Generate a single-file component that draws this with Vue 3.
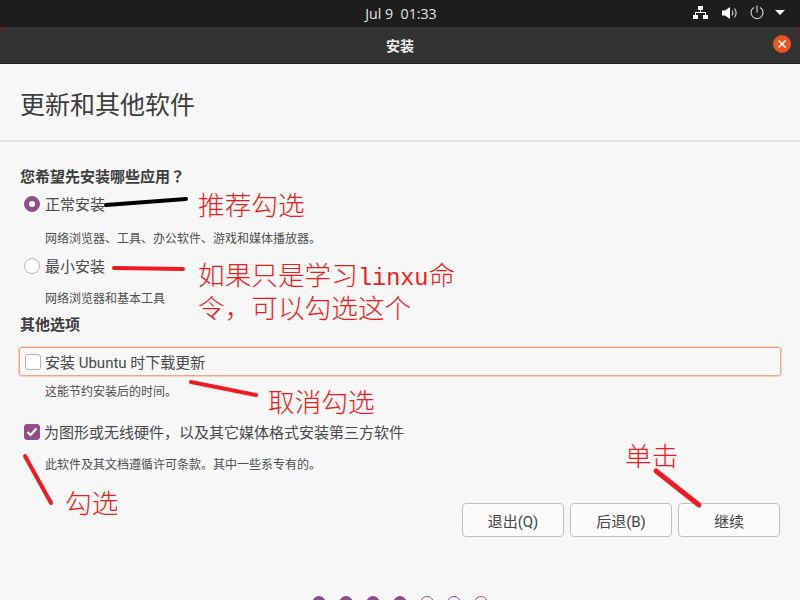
<script setup>
const dots = [true, true, true, true, false, false, false]
const strokes = [
  { d: 'M106 205 L186 199', c: '#000', w: 4 },
  { d: 'M114 268 L183 269', c: '#ed1c24', w: 4 },
  { d: 'M191 382 L256 395', c: '#ed1c24', w: 4 },
  { d: 'M25 456 L51 503', c: '#ed1c24', w: 4 },
  { d: 'M656 471 L699 505', c: '#ed1c24', w: 5 },
]
const notes = [
  { t: '推荐勾选', cls: 'n1' },
  { t: '令\uFF0C可以勾选这个', cls: 'n3' },
  { t: '取消勾选', cls: 'n4' },
  { t: '勾选', cls: 'n5' },
  { t: '单击', cls: 'n6' },
]
</script>

<template>
  <div class="screen">
    <div class="topbar">
      <span class="clock">Jul 9&nbsp;&nbsp;01:33</span>
      <div class="tray">
        <svg class="i-net" width="15" height="15" viewBox="0 0 15 15"><path fill="#fff" d="M5 1h5v4H8v2h5v3h2v4h-5v-4h2V8H3v2h2v4H0v-4h2V7h5V5H5z"/></svg>
        <svg class="i-vol" width="15" height="14" viewBox="0 0 15 14"><path fill="#fff" d="M0 4.500h3L8 1v12L3 9.500H0z"/><path fill="none" stroke="#ccc" stroke-width="1.200" d="M10 4.500c1 1.500 1 3.500 0 5M12.500 2.500c2 2.800 2 6.200 0 9"/></svg>
        <svg class="i-pow" width="14" height="15" viewBox="0 0 14 15"><path fill="none" stroke="#ddd" stroke-width="1.100" d="M7 0.500v7M3.800 2.500a6 6 0 1 0 6.400 0"/></svg>
        <svg class="i-tri" width="10" height="5" viewBox="0 0 10 5"><path fill="#fff" d="M0 0h10L5 5z"/></svg>
      </div>
    </div>
    <div class="corners">
      <div class="titlebar">
        <span class="wintitle">安装</span>
        <span class="close">
          <svg width="10" height="10" viewBox="0 0 10 10"><path stroke="#fff" stroke-width="1.600" d="M1.500 1.500l7 7M8.500 1.500l-7 7"/></svg>
        </span>
      </div>
    </div>
    <div class="content">
      <header class="head">更新和其他软件</header>
      <main class="form">
        <h2 class="q">您希望先安装哪些应用<span class="qm">&#xFF1F;</span></h2>
        <div class="row r1"><span class="radio on"></span>正常安装</div>
        <p class="sub s1">网络浏览器、工具、办公软件、游戏和媒体播放器。</p>
        <div class="row r2"><span class="radio"></span>最小安装</div>
        <p class="sub s2">网络浏览器和基本工具</p>
        <h2 class="q q2">其他选项</h2>
        <div class="row focus"><span class="check"></span>安装 Ubuntu 时下载更新</div>
        <p class="sub s3">这能节约安装后的时间。</p>
        <div class="row r4">
          <span class="check on">
            <svg width="12" height="10" viewBox="0 0 12 10"><path fill="none" stroke="#fff" stroke-width="2" d="M1.500 5l3 3 6-6.500"/></svg>
          </span>为图形或无线硬件&#xFF0C;以及其它媒体格式安装第三方软件
        </div>
        <p class="sub s4">此软件及其文档遵循许可条款。其中一些系专有的。</p>
        <div class="actions">
          <button class="btn">退出(Q)</button>
          <button class="btn">后退(B)</button>
          <button class="btn">继续</button>
        </div>
      </main>
      <div class="dots">
        <span v-for="(d, i) in dots" :key="i" class="dot" :class="{ full: d }"></span>
      </div>
    </div>

    <svg class="ink" width="800" height="600" viewBox="0 0 800 600">
      <path v-for="(s, i) in strokes" :key="i" :d="s.d" :stroke="s.c" :stroke-width="s.w" stroke-linecap="round" fill="none"/>
    </svg>
    <span class="note n2">如果只是学习<span class="latin">linxu</span>命</span>
    <span v-for="n in notes" :key="n.cls" class="note" :class="n.cls">{{ n.t }}</span>
  </div>
</template>

<style>
html, body { margin: 0; background: #f7f7f7; overflow: hidden; }
</style>

<style scoped>
.screen {
  position: relative;
  width: 800px;
  height: 600px;
  overflow: hidden;
  display: flex;
  flex-direction: column;
  background: #f7f7f7;
  color: #3d3d3d;
  font-family: Roboto, "Noto Sans CJK SC", sans-serif;
}
.topbar {
  flex: none;
  height: 27px;
  background: #1d1d1d;
  display: flex;
  align-items: center;
  justify-content: center;
  position: relative;
}
.clock { color: #e4e4e4; font-size: 14.2px; font-family: "Open Sans", "Noto Sans", sans-serif; margin-left: 2px; }
.tray {
  position: absolute;
  right: 15px;
  top: 0;
  height: 25px;
  display: flex;
  align-items: center;
}
.i-vol { margin-left: 14px; }
.i-pow { margin-left: 13px; }
.i-tri { margin-left: 11px; }
.corners { flex: none; background: #7a1c22; }
.titlebar {
  height: 36px;
  background: #343333;
  border-bottom: 1px solid #1f1f1f;
  border-radius: 6px 6px 0 0;
  display: flex;
  align-items: center;
  justify-content: center;
  position: relative;
}
.wintitle { color: #eee; font-size: 14px; font-weight: 700; }
.close {
  position: absolute;
  right: 9px;
  top: 8px;
  width: 18px;
  height: 18px;
  border-radius: 50%;
  background: #e95420;
  display: flex;
  align-items: center;
  justify-content: center;
}
.content { flex: 1; display: flex; flex-direction: column; min-height: 0; position: relative; }
.head {
  flex: none;
  height: 78px;
  box-sizing: border-box;
  padding: 25px 0 0 20px;
  font-size: 25px;
  line-height: 34px;
  border-bottom: 2px solid #e2e2e2;
}
.form { padding: 24px 19px 0; display: flex; flex-direction: column; }
.q { margin: 0; height: 20px; font-size: 15px; font-weight: 700; line-height: 20px; padding-left: 1px; }
.qm { font-family: "Noto Sans CJK TC", sans-serif; }
.row {
  display: flex;
  align-items: center;
  font-size: 15px;
  line-height: 20px;
  color: #4a4a4a;
}
.sub { margin: 0; padding-left: 26px; font-size: 12px; line-height: 18px; color: #4f4f4f; }
.r1 { margin-top: 9px; padding-left: 5px; height: 20px; }
.s1 { margin-top: 15px; }
.r2 { margin-top: 9px; padding-left: 5px; height: 20px; }
.s2 { margin-top: 13px; }
.q2 { margin-top: 7px; }
.focus {
  margin-top: 12px;
  height: 25px;
  padding: 2px 0 0 5px;
  border: 1px solid #f0a58c;
  box-shadow: 0 0 0 0.500px #f0a58c;
  border-radius: 3px;
  width: 755px;
}
.s3 { margin-top: 7px; }
.r4 { margin-top: 22px; padding-left: 5px; height: 20px; }
.s4 { margin-top: 13px; }
.radio {
  width: 14px;
  height: 14px;
  border-radius: 50%;
  border: 1px solid #b5b5b5;
  background: #fff;
  margin: 0 5px 2px 0;
  flex: none;
}
.radio.on { background: #924d8b; border-color: #924d8b; position: relative; }
.radio.on::after {
  content: "";
  position: absolute;
  left: 4px;
  top: 4px;
  width: 6px;
  height: 6px;
  border-radius: 50%;
  background: #fff;
}
.check {
  width: 14px;
  height: 14px;
  border: 1px solid #b5b5b5;
  border-radius: 3px;
  background: #fff;
  margin: 0 4px 2px 0;
  flex: none;
  display: flex;
  align-items: center;
  justify-content: center;
}
.check.on { background: #924d8b; border-color: #924d8b; }
.actions {
  display: flex;
  justify-content: flex-end;
  gap: 6px;
  margin-top: 29px;
  padding-right: 1px;
}
.btn {
  width: 102px;
  height: 34px;
  padding: 0;
  border: 1px solid #bfbfbf;
  border-radius: 4px;
  background: #fbfbfb;
  color: #444;
  font-family: Roboto, "Noto Sans CJK SC", sans-serif;
  font-size: 15px;
}
.dots {
  position: absolute;
  left: 312px;
  top: 532px;
  display: flex;
  gap: 13px;
}
.dot {
  width: 12px;
  height: 12px;
  border-radius: 50%;
  border: 1px solid #924d8b;
  box-sizing: content-box;
}
.dot.full { background: #924d8b; }
.ink { position: absolute; left: 0; top: 0; pointer-events: none; }
.note {
  position: absolute;
  color: #ed1c24;
  font-size: 26.67px;
  line-height: 30px;
  height: 30px;
  font-family: "Noto Sans CJK SC", sans-serif;
  font-weight: 300;
  white-space: nowrap;
}
.latin { font-family: "Liberation Mono", monospace; font-size: 23.5px; line-height: 1; }
.n1 { left: 198px; top: 189px; }
.n2 { left: 198px; top: 259px; }
.n3 { left: 198px; top: 292px; }
.n4 { left: 268px; top: 386px; }
.n5 { left: 65px; top: 487px; }
.n6 { left: 625px; top: 440px; }
</style>
